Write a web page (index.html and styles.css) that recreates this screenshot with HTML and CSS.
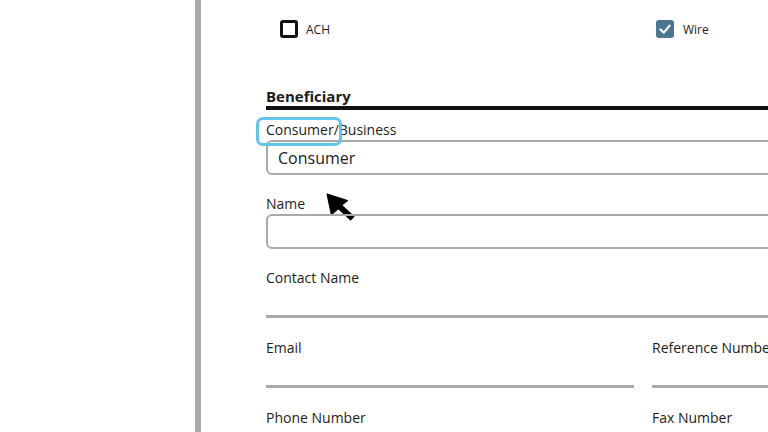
FILE: index.html
```html
<!DOCTYPE html>
<html lang="en">
<head>
<meta charset="UTF-8" />
<meta name="viewport" content="width=device-width, initial-scale=1" />
<title>Beneficiary</title>
<link rel="stylesheet" href="styles.css">
</head>
<body>

<div class="stage">
  <div class="gutter"></div>
  <div class="edge"></div>

  <main class="sheet">
    <div class="methods">
      <label class="check">
        <span class="tick-box"></span>
        ACH
      </label>
      <label class="check check-wire">
        <span class="tick-box checked">
          <svg viewBox="0 0 18 18" width="18" height="18"><path d="M4.5 9.5 L7.8 12.6 L13.6 5.6" fill="none" stroke="#fff" stroke-width="2.2" stroke-linecap="round" stroke-linejoin="round"/></svg>
        </span>
        Wire
      </label>
    </div>

    <h2 class="section">Beneficiary</h2>

    <div class="field">
      <span class="label">Consumer/Business</span>
      <div class="boxed">Consumer</div>
      <span class="focus-ring"></span>
      <svg class="pointer" viewBox="0 0 30 30" width="32" height="32">
        <polygon points="2,2 21,8 15.5,12.5 27,23 24,26 12.5,15.5 6,21" fill="#000" stroke="#000" stroke-width="1.2" stroke-linejoin="round"/>
      </svg>
    </div>

    <div class="field">
      <span class="label">Name</span>
      <div class="boxed"></div>
    </div>

    <div class="field line-field">
      <span class="label">Contact Name</span>
      <div class="line"></div>
    </div>

    <div class="pair">
      <div class="field line-field">
        <span class="label">Email</span>
        <div class="line"></div>
      </div>
      <div class="field line-field">
        <span class="label">Reference Number</span>
        <div class="line"></div>
      </div>
    </div>

    <div class="pair">
      <div class="field line-field">
        <span class="label">Phone Number</span>
        <div class="line"></div>
      </div>
      <div class="field line-field">
        <span class="label">Fax Number</span>
        <div class="line"></div>
      </div>
    </div>
  </main>
</div>

</body>
</html>
```

FILE: styles.css
```css
body {
  margin: 0;
  background: #fff;
  color: #1c1c1c;
  font-family: 'Open Sans', 'Noto Sans', sans-serif;
  overflow: hidden;
}
.stage {
  display: flex;
  height: 432px;
  overflow: hidden;
}
.gutter {
  flex: none;
  width: 195px;
}
.edge {
  flex: none;
  width: 6px;
  background: #aaa;
}
.sheet {
  flex: none;
  width: 754px;
  padding-left: 65px;
}
.methods {
  display: grid;
  grid-template-columns: 368px 368px;
  column-gap: 18px;
  padding-top: 20px;
  margin-bottom: 48px;
}
.check {
  display: flex;
  align-items: center;
  gap: 8px;
  font-size: 12px;
  height: 18px;
  padding-left: 14px;
}
.check-wire {
  padding-left: 4px;
  gap: 9px;
}
.tick-box {
  box-sizing: border-box;
  width: 18px;
  height: 18px;
  border: 3px solid #111;
  border-radius: 3px;
}
.tick-box.checked {
  border: none;
  background: #4a7690;
  display: flex;
}
.section {
  margin: 0 0 10px 0;
  font-size: 15px;
  font-weight: 700;
  line-height: 20px;
  border-bottom: 4px solid #111;
}
.field {
  position: relative;
  margin-bottom: 19px;
}
.label {
  display: block;
  font-size: 14px;
  line-height: 19px;
  margin-bottom: 1px;
  white-space: nowrap;
}
.boxed {
  box-sizing: border-box;
  height: 35px;
  border: 2px solid #a9a9a9;
  border-radius: 6px;
  display: flex;
  align-items: center;
  padding-left: 10px;
  font-size: 16px;
}
.line-field {
  margin-bottom: 20px;
}
.line {
  height: 27px;
  border-bottom: 3px solid #a9a9a9;
}
.pair {
  display: grid;
  grid-template-columns: 368px 368px;
  column-gap: 18px;
}
.focus-ring {
  position: absolute;
  left: -10px;
  top: -3px;
  width: 86px;
  height: 29px;
  box-sizing: border-box;
  border: 3.5px solid #63c5e7;
  border-radius: 7px;
}
.pointer {
  position: absolute;
  left: 59px;
  top: 72px;
}
```
